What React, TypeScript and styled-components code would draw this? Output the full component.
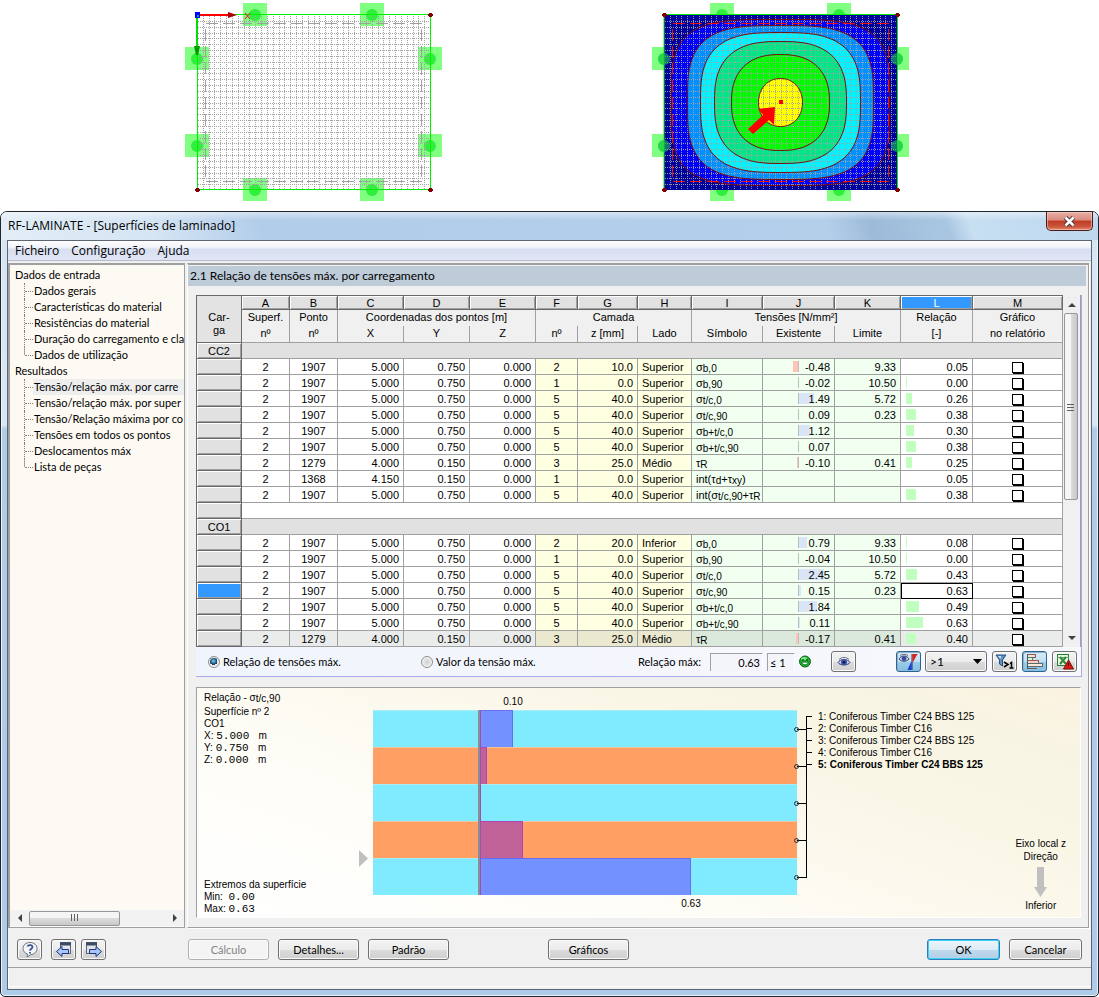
import React from "react";
import styled, { createGlobalStyle, css } from "styled-components";

const titleFont = `"Open Sans", "Noto Sans", sans-serif`;
const uiFont = `Lato, "Liberation Sans", sans-serif`;
const gridFont = `"Liberation Sans", Arial, sans-serif`;
const plotFont = `"Liberation Sans", Arial, sans-serif`;

const GlobalStyle = createGlobalStyle`
  * { box-sizing: border-box; }
  body { margin: 0; background: #fff; color: #000; font: 11px/16px ${uiFont}; }
`;

/* ---------- surface model figures ---------- */

const Figures = styled.header`
  display: flex;
  justify-content: center;
  gap: 195px;
  padding-right: 4px;
  height: 211px;
`;

const W = 233;
const H = 175;

const supports: [number, number][] = [
  [58, 0], [175, 0], [58, H], [175, H],
  [0, 44], [0, 131], [W, 44], [W, 131],
];

function Supports() {
  return (
    <g>
      {supports.map(([x, y]) => (
        <g key={`${x}-${y}`}>
          <rect x={x - 12} y={y - 12} width="24" height="23" fill="#80ff80" />
          <circle cx={x} cy={y} r="6" fill="#2fee3c" />
        </g>
      ))}
    </g>
  );
}

function Mesh({ color }: { color: string }) {
  const vertical = Array.from({ length: 39 }, (_, i) => Math.round(((i + 1) * W) / 40));
  const horizontal = Array.from({ length: 29 }, (_, i) => Math.round(((i + 1) * H) / 30));
  return (
    <g stroke={color} strokeWidth="1" shapeRendering="crispEdges">
      {vertical.map((x) => (
        <line key={`v${x}`} x1={x + 0.5} x2={x + 0.5} y1="1" y2={H} strokeDasharray="1 1" />
      ))}
      {horizontal.map((y) => (
        <line key={`h${y}`} x1="1" x2={W} y1={y + 0.5} y2={y + 0.5} strokeDasharray="1 1" />
      ))}
    </g>
  );
}

function Corners() {
  return (
    <g fill="#800000">
      {[[0, 0], [W, 0], [0, H], [W, H]].map(([x, y]) => (
        <path key={`${x}-${y}`} d={`M${x - 2} ${y - 1}h1v-1h3v1h1v2h-1v1h-3v-1h-1z`} />
      ))}
    </g>
  );
}

function MeshFigure() {
  return (
    <svg width="270" height="210" viewBox="0 0 270 210" role="img" aria-label="Malha">
      <g transform="translate(17 15)">
        <rect width={W} height={H} fill="#fff" />
        <Supports />
        <Mesh color="#a4a4a4" />
        <rect x="8.5" y="8.5" width={W - 17} height={H - 17} fill="none" stroke="#a0a0a0" strokeDasharray="12 5" shapeRendering="crispEdges" />
        <rect x="0.5" y="-0.5" width={W} height={H} fill="none" stroke="#00f000" />
        <path d="M0 0V34" stroke="#00e000" strokeWidth="2" />
        <path d="M-3 31h6l-2 9h-2z" fill="#009a00" />
        <path d="M2 0H34" stroke="#f00" strokeWidth="2" />
        <path d="M31 -3l9 3l-9 3z" fill="#b00000" />
        <path d="M48 -2l5 6M53 -2l-5 6" stroke="#f01010" />
        <Corners />
        <rect x="-2" y="-3" width="5" height="6" fill="#00f" />
        <rect x="0" y="0" width="2" height="2" fill="#0a8" />
      </g>
    </svg>
  );
}

/** Closed curve |x/a|^n + |y/b|^n = 1 around the centre of the surface. */
function contour(a: number, b: number, n: number) {
  const pts: string[] = [];
  for (let i = 0; i < 120; i++) {
    const t = (i / 120) * Math.PI * 2;
    const c = Math.cos(t);
    const s = Math.sin(t);
    const x = W / 2 + a * Math.sign(c) * Math.pow(Math.abs(c), 2 / n);
    const y = H / 2 + b * Math.sign(s) * Math.pow(Math.abs(s), 2 / n);
    pts.push(`${x.toFixed(1)} ${y.toFixed(1)}`);
  }
  return `M${pts.join("L")}Z`;
}

const contours = [
  { a: 109, b: 83, n: 3.8, fill: "#0000fa" },
  { a: 93, b: 77, n: 3.3, fill: "#0090ff" },
  { a: 80, b: 70, n: 3, fill: "#00f4ff" },
  { a: 66, b: 61, n: 2.7, fill: "#00e687" },
  { a: 49, b: 48, n: 2.4, fill: "#00fb00" },
  { a: 22, b: 24, n: 2.1, fill: "#ffff00" },
];

function StressFigure() {
  return (
    <svg width="270" height="210" viewBox="0 0 270 210" role="img" aria-label="Relação de tensões">
      <g transform="translate(19 15)">
        <Supports />
        <rect width={W} height={H} fill="#00009c" />
        {contours.map((c) => (
          <path key={c.fill} d={contour(c.a, c.b, c.n)} fill={c.fill} />
        ))}
        <g opacity="0.9">
          <Mesh color="#a4a4a4" />
        </g>
        {contours.map((c) => (
          <path key={c.fill} d={contour(c.a, c.b, c.n)} fill="none" stroke="#7a0808" />
        ))}
        <rect x="8.5" y="8.5" width={W - 17} height={H - 17} fill="none" stroke="#f01010" strokeDasharray="12 5" shapeRendering="crispEdges" />
        <path d="M0 0.5V175M0 -0.5H233M233.5 0V175" stroke="#00f000" />
        {[[0, 44], [0, 131], [W, 44], [W, 131]].map(([x, y]) => (
          <circle key={`${x}-${y}`} cx={x} cy={y} r="6" fill="#20c850" opacity="0.6" />
        ))}
        <Corners />
        <path d="M111 92L110 110L105 105L89 119L84 114L99 100L94 94Z" fill="#f00" />
        <rect x="115" y="85" width="4" height="4" fill="#f00" />
      </g>
    </svg>
  );
}

/* ---------- window frame ---------- */

const Frame = styled.div`
  border: 1px solid #22262c;
  border-radius: 7px 7px 5px 5px;
  padding: 0 6px 6px;
  background: linear-gradient(180deg, #d6e5f3 0, #d9e7f4 213px, #b0cce9 217px, #aecbe9 100%);
  box-shadow: inset 0 0 0 1px #e8f3fc;
`;

const TitleBar = styled.div`
  display: flex;
  justify-content: space-between;
  height: 28px;
  margin: 0 -6px;
  padding: 0 5px 0 7px;
  border-radius: 6px 6px 0 0;
  background:
    linear-gradient(180deg, rgba(255, 255, 255, 0.45) 0, rgba(255, 255, 255, 0) 8px),
    linear-gradient(70deg, #e2edf7 0, #d5e5f3 14%, #b2cde9 24%, #b4cfea 75%, #9dbbd9 79%, #aac7e2 86%, #c8dff2 88%, #bdd7ee 100%);
`;

const Title = styled.h1`
  margin: 0;
  font: 12px/28px ${titleFont};
`;

const CloseButton = styled.button`
  display: flex;
  align-items: center;
  justify-content: center;
  width: 47px;
  height: 19px;
  padding: 0;
  border: 1px solid #4a1c1c;
  border-top: 0;
  border-radius: 0 0 5px 5px;
  background: linear-gradient(180deg, #e8b0a6 0, #d98b7e 45%, #bf3a24 50%, #c9553c 80%, #e08a70 100%);
  box-shadow: inset 0 0 0 1px rgba(255, 220, 210, 0.5);
`;

const Client = styled.div`
  border: 1px solid #5d6570;
  background: #f0f0f0;
`;

const MenuBar = styled.nav`
  display: flex;
  gap: 12px;
  height: 20px;
  padding-left: 7px;
  border-bottom: 1px solid #b6bccc;
  background: linear-gradient(180deg, #fff 0, #eef1f9 7px, #d8dff0 8px, #dfe5f5 100%);
`;

const MenuItem = styled.button`
  padding: 0;
  border: 0;
  background: none;
  font: 12px/18px ${titleFont};
`;

const Body = styled.div`
  display: flex;
  padding: 2px 2px 0 0;
`;

/* ---------- navigator tree ---------- */

const Tree = styled.nav`
  display: flex;
  flex-direction: column;
  justify-content: space-between;
  flex: none;
  width: 177px;
  margin-right: 2px;
  border: 1px solid #a0a0a0;
  border-width: 2px 1px 1px 2px;
  background: #fdfaf3;
`;

const TreeList = styled.ul`
  margin: 0;
  padding: 2px 0 0 5px;
  list-style: none;
`;

const Branch = styled.ul`
  margin: 0;
  padding: 0 0 0 9px;
  list-style: none;
`;

const Leaf = styled.li`
  display: flex;
  height: 16px;
  border-left: 1px dotted #808080;
  &:last-child {
    border-image: linear-gradient(180deg, #a0a0a0 50%, transparent 50%) 1;
  }
  &::before {
    content: "";
    width: 8px;
    height: 8px;
    flex: none;
    border-bottom: 1px dotted #808080;
  }
`;

const LeafLink = styled.a<{ $selected?: boolean }>`
  flex: 1;
  padding-left: 1px;
  color: #000;
  text-decoration: none;
  white-space: nowrap;
  background: ${(p) => (p.$selected ? "#eeeeee" : "none")};
`;

const HScroll = styled.div`
  display: flex;
  align-items: center;
  height: 16px;
  margin-bottom: 1px;
  background: #f2f2f2;
`;

const ScrollArrow = styled.button`
  display: flex;
  align-items: center;
  justify-content: center;
  width: 19px;
  height: 15px;
  padding: 0;
  border: 0;
  background: none;
`;

const HThumb = styled.div`
  display: flex;
  align-items: center;
  justify-content: center;
  width: 91px;
  height: 15px;
  margin-right: auto;
  border: 1px solid #979797;
  border-radius: 2px;
  background: linear-gradient(180deg, #f5f5f5 0 50%, #dcdcdc 50%, #c8c8c8);
`;

/* ---------- main panel ---------- */

const Panel = styled.main`
  flex: 1;
  min-width: 0;
  border: 1px solid #a0a0a0;
  border-width: 2px 1px 1px 0;
  border-left: 1px solid #fff;
  padding: 1px 0 9px;
  box-shadow: 1px 1px 0 #fff;
`;

const PanelTitle = styled.h2`
  height: 20px;
  margin: 0 2px 9px 0;
  padding-left: 2px;
  background: #becbd9;
  font: 12px/20px ${uiFont};
`;

const Content = styled.div`
  padding: 0 6px 0 8px;
`;

const GridBox = styled.section`
  border-right: 1px solid #a9a9ea;
  border-bottom: 1px solid #a9a9ea;
  background: linear-gradient(90deg, #f0f4fc, #f8f9fd);
`;

const GridRow = styled.div`
  display: flex;
  gap: 1px;
  padding-right: 1px;
  border-right: 1px solid #a0a0a0;
  background: #f0f0f0;
`;

const Grid = styled.table`
  flex: 1;
  min-width: 0;
  width: 100%;
  table-layout: fixed;
  border-spacing: 0;
  border-left: 1px solid #696969;
  background: #fff;
  font: 11px/15px ${gridFont};
  th,
  td {
    padding: 0;
    font-weight: normal;
    white-space: nowrap;
  }
`;

const Letter = styled.th<{ $active?: boolean }>`
  height: 15px;
  line-height: 12px;
  border-top: 1px solid #696969;
  border-right: 1px solid #696969;
  border-bottom: 1px solid #696969;
  color: ${(p) => (p.$active ? "#fff" : "#000")};
  background: ${(p) => (p.$active ? "#3399ff" : "#e1e1e1")};
  box-shadow: inset 1px 1px 0 #fff, inset -1px -1px 0 #a0a0a0;
`;

const HeadTop = styled.th`
  height: 16px;
  border-right: 1px solid #a0a0a0;
  background: #f0f0f0;
  vertical-align: top;
`;

const HeadSub = styled.th`
  height: 17px;
  border-right: 1px solid #a0a0a0;
  border-bottom: 1px solid #a0a0a0;
  background: #f0f0f0;
  vertical-align: top;
`;

const CornerHead = styled.th`
  border-top: 1px solid #696969;
  border-right: 1px solid #696969;
  border-bottom: 1px solid #696969;
  background: #e3e3e3;
  line-height: 13px;
  vertical-align: middle;
  && {
    padding-top: 10px;
  }
`;

const RowHead = styled.th<{ $active?: boolean }>`
  height: 16px;
  border-right: 1px solid #696969;
  border-bottom: 1px solid #696969;
  line-height: 14px;
  background: ${(p) => (p.$active ? "#3399ff" : "#e1e1e1")};
  box-shadow: inset 1px 1px 0 #fff, inset -1px -1px 0 #a0a0a0;
`;

const Span = styled.td<{ $blank?: boolean }>`
  border-right: 1px solid #a0a0a0;
  border-bottom: 1px solid #a0a0a0;
  background: ${(p) => (p.$blank ? "#fff" : "#e1e1e1")};
`;

type Tone = "plain" | "yellow" | "green";
const tones: Record<Tone, [string, string]> = {
  plain: ["#fff", "#eaeceb"],
  yellow: ["#ffffe1", "#ebe8d0"],
  green: ["#f0fff0", "#dbe9dc"],
};

const Cell = styled.td<{ $tone?: Tone; $align?: "center" | "right" | "left"; $dim?: boolean; $focus?: boolean }>`
  position: relative;
  height: 16px;
  border-right: 1px solid #a0a0a0;
  border-bottom: 1px solid #a0a0a0;
  line-height: 13px;
  text-align: ${(p) => p.$align ?? "center"};
  background: ${(p) => tones[p.$tone ?? "plain"][p.$dim ? 1 : 0]};
  && {
    padding: 2px ${(p) => (p.$align === "right" ? 4 : 0)}px 0 ${(p) => (p.$align === "left" ? 4 : 0)}px;
  }
  ${(p) => p.$focus && "border-color: #000; box-shadow: inset 1px 1px 0 #000;"}
`;

const Value = styled.span`
  position: relative;
`;

const DataBar = styled.i<{ $kind: "neg" | "pos" | "ratio" }>`
  position: absolute;
  top: 2px;
  height: 11px;
  ${(p) => p.$kind === "ratio" && "left: 5px; background: #c1ffc1;"}
  ${(p) => p.$kind === "pos" && "left: 36px; background: #dae6f8;"}
  ${(p) => p.$kind === "neg" && "right: 36px; background: #ffc4b5;"}
`;

const Axis = styled.i`
  position: absolute;
  top: 2px;
  left: 35px;
  width: 1px;
  height: 11px;
  background: #bcbcc0;
`;

const Sub = styled.span`
  position: relative;
  top: 1px;
  font: 10px/10px ${plotFont};
`;

const Tick = styled.input`
  appearance: none;
  display: block;
  width: 11px;
  height: 11px;
  margin: 0 auto;
  border: 1px solid #000;
  background: #fff;
  box-shadow: 1px 1px 0 #000;
`;

const VScroll = styled.div`
  display: flex;
  flex-direction: column;
  flex: none;
  width: 15px;
  padding: 1px 0;
`;

const VArrow = styled(ScrollArrow)`
  width: 15px;
  height: 17px;
`;

const VThumb = styled(HThumb)`
  width: 14px;
  height: 187px;
  margin: 0 0 auto;
  background: linear-gradient(90deg, #f5f5f5 0 50%, #dcdcdc 50%, #c8c8c8);
`;

/* ---------- toolbar ---------- */

const Toolbar = styled.div`
  display: flex;
  align-items: center;
  height: 29px;
  padding: 0 4px 0 12px;
`;

const RadioLabel = styled.label`
  display: flex;
  align-items: center;
  gap: 3px;
  width: 213px;
`;

const Radio = styled.input`
  appearance: none;
  width: 12px;
  height: 12px;
  margin: 0;
  border: 1px solid #8e8f8f;
  border-radius: 50%;
  background: radial-gradient(circle, #d2d2d2, #f6f6f6);
  box-shadow: inset 0 0 0 1px #f4f4f4;
  &:checked {
    background: radial-gradient(circle at 45% 40%, #7fd0f2 0, #1f4f7c 3px, #173a5e 4px, #e8e8e8 4px);
  }
`;

const RatioLabel = styled.label`
  margin-left: 4px;
  width: 72px;
`;

const Field = styled.input<{ $width: number }>`
  width: ${(p) => p.$width}px;
  height: 18px;
  margin-right: 4px;
  padding: 0 2px;
  border: 0;
  border-left: 1px solid #a0a0a0;
  border-top: 1px solid #a0a0a0;
  border-right: 1px solid #fff;
  background: #f3f5fb;
  font: 11px/16px ${uiFont};
  text-align: ${(p) => (p.$width > 40 ? "right" : "left")};
`;

const face = css`
  border: 1px solid #707070;
  border-radius: 3px;
  background: linear-gradient(180deg, #f3f3f3 0, #ebebeb 50%, #dcdcdc 50%, #cfcfcf 100%);
  box-shadow: inset 0 0 0 1px #fafafa;
`;

const IconButton = styled.button<{ $on?: boolean; $gap?: number }>`
  display: flex;
  align-items: center;
  justify-content: center;
  flex: none;
  width: 25px;
  height: 21px;
  padding: 0;
  margin-left: ${(p) => p.$gap ?? 5}px;
  ${face}
  ${(p) =>
    p.$on &&
    css`
      border-color: #2c628b;
      background: linear-gradient(180deg, #d9ecf8 0, #bfe0f4 50%, #9ccdea 50%, #84bfe2 100%);
      box-shadow: inset 1px 1px 0 #8fb3cc;
    `}
`;

const Push = styled.div`
  flex: 1;
`;

const SelectBox = styled.div`
  position: relative;
  margin-left: 4px;
  svg {
    position: absolute;
    top: 8px;
    right: 5px;
    pointer-events: none;
  }
`;

const Select = styled.select`
  appearance: none;
  display: block;
  width: 62px;
  height: 21px;
  padding: 0 4px;
  ${face}
  font: 12px/16px ${uiFont};
`;

/* ---------- cross-section chart ---------- */

const ChartBox = styled.section`
  display: flex;
  height: 231px;
  margin: 10px 1px 0 0;
  border-top: 1px solid #a0a0a0;
  border-left: 1px solid #a0a0a0;
  border-bottom: 1px solid #fff;
  border-right: 1px solid #fff;
  background: linear-gradient(20deg, #fff 0, #fefdf8 30%, #faf6e6 70%, #f8f4e3 88%, #fcf2e2 100%);
  font: 10px/12px ${plotFont};
`;

const Info = styled.div`
  display: flex;
  flex-direction: column;
  justify-content: space-between;
  flex: none;
  width: 158px;
  padding: 4px 0 2px 7px;
`;

const InfoLine = styled.p<{ $tall?: boolean }>`
  margin: 0;
  height: ${(p) => (p.$tall ? 14 : 12)}px;
  white-space: pre;
`;

const Mono = styled.span`
  font: 11px/12px "Liberation Mono", monospace;
`;

const Legend = styled.ol`
  margin: 0;
  padding: 23px 0 0 6px;
  list-style: none;
  flex: 1;
`;

const LegendItem = styled.li<{ $strong?: boolean }>`
  font-weight: ${(p) => (p.$strong ? "bold" : "normal")};
`;

const Direction = styled.div`
  display: flex;
  flex-direction: column;
  align-items: center;
  justify-content: flex-end;
  padding: 0 14px 5px 0;
  line-height: 13px;
`;

/* ---------- footer ---------- */

const Footer = styled.footer`
  display: flex;
  align-items: center;
  height: 39px;
  padding: 4px 9px 0 9px;
`;

const Button = styled.button<{ $gap?: number; $primary?: boolean }>`
  flex: none;
  width: ${(p) => (p.$primary !== undefined ? 73 : 81)}px;
  height: 21px;
  padding: 0;
  margin-left: ${(p) => p.$gap ?? 9}px;
  ${face}
  font: 11px/16px ${uiFont};
  &:disabled {
    border-color: #adb2b5;
    background: #f4f4f4;
    color: #838383;
  }
  ${(p) =>
    p.$primary &&
    css`
      border-color: #2c7fb8;
      background: linear-gradient(180deg, #eef6fb 0, #dcebf5 50%, #c0d9ec 50%, #b2cfe6 100%);
      box-shadow: inset 0 0 0 1px #3fd0f5;
    `}
`;

const Status = styled.div`
  height: 22px;
  border-top: 1px solid #a0a0a0;
  border-bottom: 2px solid #f0f0f0;
  box-shadow: inset 0 -1px 0 #fff, inset 1px 0 0 #fff;
`;

/* ---------- data ---------- */

type Row = {
  sup: string; pt: string; x: string; y: string; z: string; n: string; zmm: string; lado: string;
  sym: React.ReactNode; ex?: string; lim?: string; rel: string; active?: boolean; dim?: boolean;
};

const s = (base: string, sub: string) => (<>{base}<Sub>{sub}</Sub></>);
const P = ["5.000", "0.750", "0.000"];

function row(pt: string, p: string[], n: string, zmm: string, lado: string, sym: React.ReactNode, ex: string, lim: string, rel: string): Row {
  return { sup: "2", pt, x: p[0], y: p[1], z: p[2], n, zmm, lado, sym, ex, lim, rel };
}

const cc2: Row[] = [
  row("1907", P, "2", "10.0", "Superior", s("σ", "b,0"), "-0.48", "9.33", "0.05"),
  row("1907", P, "1", "0.0", "Superior", s("σ", "b,90"), "-0.02", "10.50", "0.00"),
  row("1907", P, "5", "40.0", "Superior", s("σ", "t/c,0"), "1.49", "5.72", "0.26"),
  row("1907", P, "5", "40.0", "Superior", s("σ", "t/c,90"), "0.09", "0.23", "0.38"),
  row("1907", P, "5", "40.0", "Superior", s("σ", "b+t/c,0"), "1.12", "", "0.30"),
  row("1907", P, "5", "40.0", "Superior", s("σ", "b+t/c,90"), "0.07", "", "0.38"),
  row("1279", ["4.000", "0.150", "0.000"], "3", "25.0", "Médio", s("τ", "R"), "-0.10", "0.41", "0.25"),
  row("1368", ["4.150", "0.150", "0.000"], "1", "0.0", "Superior", <>int(τ<Sub>d</Sub>+τ<Sub>xy</Sub>)</>, "", "", "0.05"),
  row("1907", P, "5", "40.0", "Superior", <>int(σ<Sub>t/c,90</Sub>+τ<Sub>R</Sub></>, "", "", "0.38"),
];

const co1: Row[] = [
  row("1907", P, "2", "20.0", "Inferior", s("σ", "b,0"), "0.79", "9.33", "0.08"),
  row("1907", P, "1", "0.0", "Superior", s("σ", "b,90"), "-0.04", "10.50", "0.00"),
  row("1907", P, "5", "40.0", "Superior", s("σ", "t/c,0"), "2.45", "5.72", "0.43"),
  { ...row("1907", P, "5", "40.0", "Superior", s("σ", "t/c,90"), "0.15", "0.23", "0.63"), active: true },
  row("1907", P, "5", "40.0", "Superior", s("σ", "b+t/c,0"), "1.84", "", "0.49"),
  row("1907", P, "5", "40.0", "Superior", s("σ", "b+t/c,90"), "0.11", "", "0.63"),
  { ...row("1279", ["4.000", "0.150", "0.000"], "3", "25.0", "Médio", s("τ", "R"), "-0.17", "0.41", "0.40"), dim: true },
];

const columns = [45, 48, 48, 66, 66, 66, 42, 60, 54, 71, 72, 66, 72, 90];

function DataRow({ r }: { r: Row }) {
  const ex = parseFloat(r.ex || "0");
  const ratio = parseFloat(r.rel);
  const d = r.dim;
  return (
    <tr>
      <RowHead $active={r.active} />
      <Cell $dim={d}>{r.sup}</Cell>
      <Cell $dim={d}>{r.pt}</Cell>
      <Cell $dim={d} $align="right">{r.x}</Cell>
      <Cell $dim={d} $align="right">{r.y}</Cell>
      <Cell $dim={d} $align="right">{r.z}</Cell>
      <Cell $dim={d} $tone="yellow">{r.n}</Cell>
      <Cell $dim={d} $tone="yellow" $align="right">{r.zmm}</Cell>
      <Cell $dim={d} $tone="yellow" $align="left">{r.lado}</Cell>
      <Cell $dim={d} $tone="green" $align="left">{r.sym}</Cell>
      <Cell $dim={d} $tone="green" $align="right">
        {r.ex && <Axis />}
        {Math.abs(ex) > 0.09 && (
          <DataBar $kind={ex < 0 ? "neg" : "pos"} style={{ width: Math.round(Math.abs(ex) * 10) }} />
        )}
        <Value>{r.ex}</Value>
      </Cell>
      <Cell $dim={d} $tone="green" $align="right">{r.lim}</Cell>
      <Cell $dim={d} $align="right" $focus={r.active}>
        {!r.active && ratio !== 0.05 && <DataBar $kind="ratio" style={{ width: Math.max(1, Math.round((ratio - 0.04) * 29)) }} />}
        <Value>{r.rel}</Value>
      </Cell>
      <Cell $dim={d}><Tick type="checkbox" aria-label="Gráfico no relatório" /></Cell>
    </tr>
  );
}

function ResultGrid() {
  return (
    <Grid>
      <colgroup>{columns.map((w, i) => <col key={i} style={{ width: w }} />)}</colgroup>
      <thead>
        <tr>
          <CornerHead rowSpan={3}>Car-<br />ga</CornerHead>
          {"ABCDEFGHIJKLM".split("").map((l) => <Letter key={l} $active={l === "L"}>{l}</Letter>)}
        </tr>
        <tr>
          <HeadTop>Superf.</HeadTop>
          <HeadTop>Ponto</HeadTop>
          <HeadTop colSpan={3}>Coordenadas dos pontos [m]</HeadTop>
          <HeadTop colSpan={3}>Camada</HeadTop>
          <HeadTop colSpan={3}>Tensões [N/mm²]</HeadTop>
          <HeadTop>Relação</HeadTop>
          <HeadTop>Gráfico</HeadTop>
        </tr>
        <tr>
          {["nº", "nº", "X", "Y", "Z", "nº", "z [mm]", "Lado", "Símbolo", "Existente", "Limite", "[-]", "no relatório"].map((t, i) => (
            <HeadSub key={i}>{t}</HeadSub>
          ))}
        </tr>
      </thead>
      <tbody>
        <tr><RowHead>CC2</RowHead><Span colSpan={13} /></tr>
        {cc2.map((r, i) => <DataRow key={i} r={r} />)}
        <tr><RowHead /><Span colSpan={13} $blank /></tr>
        <tr><RowHead>CO1</RowHead><Span colSpan={13} /></tr>
        {co1.map((r, i) => <DataRow key={i} r={r} />)}
      </tbody>
    </Grid>
  );
}

/* ---------- icons ---------- */

const Eye = () => (
  <svg width="14" height="12" viewBox="0 0 14 12">
    <path d="M1 6.5C3 2.5 11 2.5 13 6.5C11 9.8 3 9.8 1 6.5Z" fill="#c4cdf0" stroke="#3c4468" />
    <path d="M2 3.5C4.5 0.8 9.5 0.8 12 3.5" fill="none" stroke="#6a6f86" />
    <circle cx="7" cy="6.2" r="3" fill="#3a54b0" />
    <circle cx="7" cy="6.2" r="1.3" fill="#10183c" />
  </svg>
);

const Smiley = () => (
  <svg width="12" height="13" viewBox="0 0 12 13">
    <circle cx="6" cy="6.5" r="5.5" fill="#1fae2c" stroke="#0d6417" />
    <ellipse cx="5" cy="3.5" rx="3" ry="1.5" fill="#7fe58a" />
    <path d="M3.5 5h1M7.5 5h1" stroke="#04300a" strokeWidth="2" />
    <path d="M2.5 7.2C4 10.5 8 10.5 9.5 7.2Z" fill="#eafff0" stroke="#0b4d14" strokeWidth="0.6" />
  </svg>
);

const EyeRamp = () => (
  <svg width="21" height="18" viewBox="0 0 21 18">
    <path d="M1 6C3 2 9 2 11 6C9 9 3 9 1 6Z" fill="#dfe4f4" stroke="#3c4468" />
    <path d="M2 2.5C4 1 8 1 10 2.5" fill="none" stroke="#6a6f86" />
    <circle cx="6" cy="5.5" r="2.5" fill="#3c4f9c" />
    <path d="M14.5 1V10L19.5 1Z" fill="#e02018" />
    <path d="M14 1V9" stroke="#702030" />
    <path d="M13.5 8V17H9.5Z" fill="#1838e0" />
    <path d="M14 9V17" stroke="#203070" />
  </svg>
);

const Filter = () => (
  <svg width="20" height="16" viewBox="0 0 20 16">
    <path d="M1 1H11L7.5 6V12L4.5 10V6Z" fill="#5a92c8" stroke="#28507c" />
    <path d="M3 2H6L5.5 5Z" fill="#d8ecfa" />
    <path d="M9 8L13 10.5L9 13" fill="none" stroke="#000" strokeWidth="1.5" />
    <path d="M15 9.5L16.5 8.5V14M14.5 14H18.5" fill="none" stroke="#000" strokeWidth="1.5" />
  </svg>
);

const Bars = () => (
  <svg width="20" height="17" viewBox="0 0 20 17" shapeRendering="crispEdges">
    <path d="M2.5 1V16" stroke="#4a5a66" />
    <path d="M3 1.5H10.5V4.5H3" fill="#f8e0d4" stroke="#8a5a58" />
    <path d="M3 4.5H7.5V7.5H3" fill="#e0f4dc" stroke="#5a7a60" />
    <path d="M3 7.5H13.5V10.5H3" fill="#f8d0c4" stroke="#a05a50" />
    <path d="M3 10.5H17.5V13.5H3" fill="#f8e8dc" stroke="#5a6a70" />
    <path d="M3 15.5H12" stroke="#6a5a58" />
  </svg>
);

const Excel = () => (
  <svg width="18" height="17" viewBox="0 0 18 17">
    <rect x="1.5" y="1.5" width="11" height="11" fill="#e8f6e4" stroke="#2c7a34" />
    <path d="M1 4.5H13" stroke="#68a868" />
    <path d="M4 4L10 11M10 4L4 11" stroke="#2e8a38" strokeWidth="2" />
    <path d="M12.5 7L17.5 16H7.5Z" fill="#d81c14" stroke="#7c0c08" />
    <path d="M12.5 10V13" stroke="#400" />
  </svg>
);

const Help = () => (
  <svg width="18" height="17" viewBox="0 0 18 17">
    <path d="M9 1.5C13 1.5 16 4 16 7.5C16 11 13 13.5 10 13.5L6 16L6.5 13C3.5 12 2 10 2 7.5C2 4 5 1.5 9 1.5Z" fill="#f4f6fa" stroke="#6c7482" />
    <path d="M6.5 5.5C7 3.5 11.5 3.5 11.5 6C11.5 7.8 9 7.8 9 9.8M9 11V12.5" fill="none" stroke="#3a5490" strokeWidth="1.8" />
  </svg>
);

const PageArrow = ({ next }: { next?: boolean }) => (
  <svg width="18" height="17" viewBox="0 0 18 17">
    <rect x={next ? 1.5 : 5.5} y="1.5" width="10" height="11" fill="#dfe3ea" stroke="#5c6472" />
    <path d={next ? "M1 3H12" : "M5 3H16"} stroke="#3c4a66" strokeWidth="3" />
    <path
      d={next ? "M4.5 8.5H11V5.5L16.5 10.5L11 15.5V12.5H4.5Z" : "M13.5 8.5H7V5.5L1.5 10.5L7 15.5V12.5H13.5Z"}
      fill="#a9c6f6" stroke="#1c3480"
    />
  </svg>
);

const Arrow = ({ d }: { d: string }) => (
  <svg width="8" height="8" viewBox="0 0 8 8"><path d={d} fill="#404040" /></svg>
);

const Grip = ({ turned }: { turned?: boolean }) => (
  <svg width="8" height="8" viewBox="0 0 8 8" shapeRendering="crispEdges">
    <path d={turned ? "M0 1.5H7M0 4.5H7M0 7.5H7" : "M0.5 0V7M3.5 0V7M6.5 0V7"} stroke="#606060" />
  </svg>
);

/* ---------- layered section drawing ---------- */

const layers = [33, 7, 0, 43, 211];

function SectionChart() {
  return (
    <svg width="457" height="229" viewBox="0 0 457 229" role="img" aria-label="Relação por camada">
      {layers.map((w, i) => {
        const y = 22 + i * 37;
        const orange = i % 2 === 1;
        return (
          <g key={i} shapeRendering="crispEdges">
            <rect x="18" y={y} width="424" height="37" fill={orange ? "#ff9f63" : "#80eaff"} />
            <path d={`M18 ${y + 0.5}H442`} stroke={orange ? "#f0c4a0" : "#a8ecf4"} />
            {w > 0 && <rect x="125" y={y} width={w} height="37" fill={orange ? "#c06298" : "#7391ff"} />}
            {w > 0 && <path d={`M125 ${y + 0.5}H${125 + w - 0.5}V${y + 37}`} fill="none" stroke={orange ? "#a848b8" : "#6c6cf0"} />}
          </g>
        );
      })}
      <path d="M124 22V207" stroke="#8c8c9c" strokeWidth="2" />
      <path d="M125.5 22V207" stroke="#a050a8" />
      <path d="M4 162L13 170.5L4 179Z" fill="#c0c0c0" />
      <g fill="none" stroke="#000" shapeRendering="crispEdges">
        <path d="M457 28.5H451.5V189.5" />
        <path d="M451 40.5H457M451 52.5H457M451 64.5H457M451 76.5H457" />
        {layers.map((_, i) => <path key={i} d={`M442 ${41.5 + i * 37}H451`} />)}
      </g>
      {layers.map((_, i) => (
        <circle key={i} cx="441.5" cy={41.5 + i * 37} r="2" fill="none" stroke="#203038" />
      ))}
      <text x="158" y="17" textAnchor="middle">0.10</text>
      <text x="336" y="219" textAnchor="middle">0.63</text>
    </svg>
  );
}

const inputPages = ["Dados gerais", "Características do material", "Resistências do material", "Duração do carregamento e cla", "Dados de utilização"];
const resultPages = ["Tensão/relação máx. por carre", "Tensão/relação máx. por super", "Tensão/Relação máxima por co", "Tensões em todos os pontos", "Deslocamentos máx", "Lista de peças"];

function TreeGroup({ title, pages, selected }: { title: string; pages: string[]; selected?: number }) {
  return (
    <li>
      {title}
      <Branch>
        {pages.map((p, i) => (
          <Leaf key={p}>
            <LeafLink href="#" $selected={i === selected}>{p}</LeafLink>
          </Leaf>
        ))}
      </Branch>
    </li>
  );
}

export default function App() {
  return (
    <>
      <GlobalStyle />
      <Figures>
        <MeshFigure />
        <StressFigure />
      </Figures>
      <Frame>
        <TitleBar>
          <Title>RF-LAMINATE - [Superfícies de laminado]</Title>
          <CloseButton aria-label="Fechar">
            <svg width="13" height="11" viewBox="0 0 13 11">
              <path d="M2.5 1.5L10.5 9.5M10.5 1.5L2.5 9.5" stroke="#4a3438" strokeWidth="4.5" />
              <path d="M2.5 1.5L10.5 9.5M10.5 1.5L2.5 9.5" stroke="#fff" strokeWidth="2.5" />
            </svg>
          </CloseButton>
        </TitleBar>
        <Client>
          <MenuBar>
            <MenuItem>Ficheiro</MenuItem>
            <MenuItem>Configuração</MenuItem>
            <MenuItem>Ajuda</MenuItem>
          </MenuBar>
          <Body>
            <Tree>
              <TreeList>
                <TreeGroup title="Dados de entrada" pages={inputPages} />
                <TreeGroup title="Resultados" pages={resultPages} selected={0} />
              </TreeList>
              <HScroll>
                <ScrollArrow aria-label="Esquerda"><Arrow d="M6 0V8L2 4Z" /></ScrollArrow>
                <HThumb><Grip /></HThumb>
                <ScrollArrow aria-label="Direita"><Arrow d="M2 0V8L6 4Z" /></ScrollArrow>
              </HScroll>
            </Tree>
            <Panel>
              <PanelTitle>2.1 Relação de tensões máx. por carregamento</PanelTitle>
              <Content>
                <GridBox>
                  <GridRow>
                    <ResultGrid />
                    <VScroll>
                      <VArrow aria-label="Acima"><Arrow d="M0 6H8L4 2Z" /></VArrow>
                      <VThumb><Grip turned /></VThumb>
                      <VArrow aria-label="Abaixo"><Arrow d="M0 2H8L4 6Z" /></VArrow>
                    </VScroll>
                  </GridRow>
                  <Toolbar>
                    <RadioLabel><Radio type="radio" name="mode" defaultChecked />Relação de tensões máx.</RadioLabel>
                    <RadioLabel><Radio type="radio" name="mode" />Valor da tensão máx.</RadioLabel>
                    <RatioLabel htmlFor="ratio">Relação máx:</RatioLabel>
                    <Field id="ratio" $width={53} defaultValue="0.63" readOnly />
                    <Field aria-label="Limite" $width={28} defaultValue="≤ 1" readOnly />
                    <Smiley />
                    <IconButton $gap={20} aria-label="Ver"><Eye /></IconButton>
                    <Push />
                    <IconButton $on aria-label="Escala de cores"><EyeRamp /></IconButton>
                    <SelectBox>
                      <Select aria-label="Filtro"><option>&gt;1</option></Select>
                      <svg width="9" height="5" viewBox="0 0 9 5"><path d="M0 0H9L4.5 5Z" fill="#000" /></svg>
                    </SelectBox>
                    <IconButton aria-label="Filtrar"><Filter /></IconButton>
                    <IconButton $on aria-label="Barras"><Bars /></IconButton>
                    <IconButton aria-label="Exportar"><Excel /></IconButton>
                  </Toolbar>
                </GridBox>
                <ChartBox>
                  <Info>
                    <div>
                      <InfoLine $tall>Relação - σ<Sub>t/c,90</Sub></InfoLine>
                      <InfoLine>Superfície nº 2</InfoLine>
                      <InfoLine>CO1</InfoLine>
                      <InfoLine>X: <Mono>5.000 </Mono> m</InfoLine>
                      <InfoLine>Y: <Mono>0.750 </Mono> m</InfoLine>
                      <InfoLine>Z: <Mono>0.000 </Mono> m</InfoLine>
                    </div>
                    <div>
                      <InfoLine>Extremos da superfície</InfoLine>
                      <InfoLine>Min:  <Mono>0.00</Mono></InfoLine>
                      <InfoLine>Max: <Mono>0.63</Mono></InfoLine>
                    </div>
                  </Info>
                  <SectionChart />
                  <Legend>
                    <LegendItem>1: Coniferous Timber C24 BBS 125</LegendItem>
                    <LegendItem>2: Coniferous Timber C16</LegendItem>
                    <LegendItem>3: Coniferous Timber C24 BBS 125</LegendItem>
                    <LegendItem>4: Coniferous Timber C16</LegendItem>
                    <LegendItem $strong>5: Coniferous Timber C24 BBS 125</LegendItem>
                  </Legend>
                  <Direction>
                    <span>Eixo local z</span>
                    <span>Direção</span>
                    <svg width="13" height="36" viewBox="0 0 13 36">
                      <path d="M3 4H10V24H13L6.5 34L0 24H3Z" fill="#c0c0c0" />
                    </svg>
                    <span>Inferior</span>
                  </Direction>
                </ChartBox>
              </Content>
            </Panel>
          </Body>
          <Footer>
            <IconButton $gap={0} aria-label="Ajuda"><Help /></IconButton>
            <IconButton $gap={9} aria-label="Anterior"><PageArrow /></IconButton>
            <IconButton aria-label="Seguinte"><PageArrow next /></IconButton>
            <Button $gap={82} disabled>Cálculo</Button>
            <Button>Detalhes...</Button>
            <Button>Padrão</Button>
            <Button $gap={99}>Gráficos</Button>
            <Push />
            <Button $primary>OK</Button>
            <Button $primary={false}>Cancelar</Button>
          </Footer>
          <Status />
        </Client>
      </Frame>
    </>
  );
}
